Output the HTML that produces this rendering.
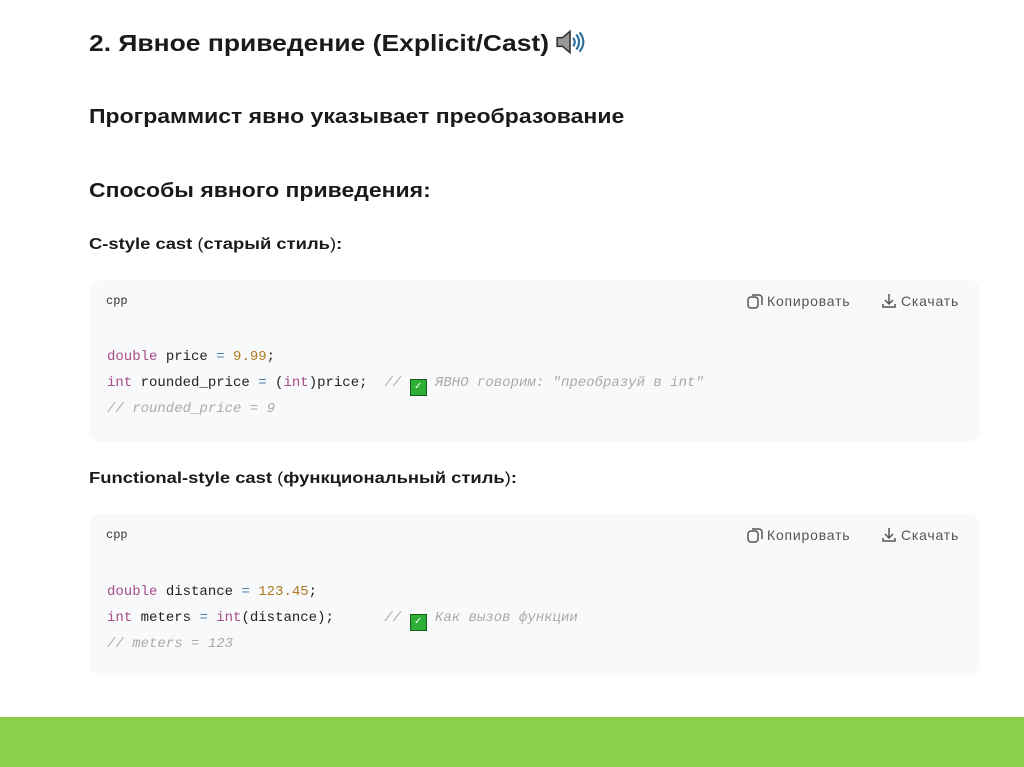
<!DOCTYPE html>
<html><head><meta charset="utf-8"><style>
body{margin:0;width:1024px;height:767px;background:#fff;position:relative;overflow:hidden;font-family:"Liberation Sans","DejaVu Sans",sans-serif;color:#1a1a1a}
.t{position:absolute;left:89px;font-weight:bold;white-space:nowrap;transform:scaleX(1.15);transform-origin:left center}
.code{position:absolute;left:89px;width:891px;background:#f8f9fb;border-radius:12px}
.lang{position:absolute;left:17px;top:14px;font-family:"Liberation Mono",monospace;font-size:12px;color:#333}
.b{position:absolute;top:12px;font-size:14px;color:#555;display:flex;align-items:center;gap:3px;letter-spacing:0.8px;white-space:nowrap}
pre{position:absolute;left:18px;margin:0;font-family:"Liberation Mono","DejaVu Sans Mono",monospace;font-size:14px;line-height:26px;color:#222}
.k{color:#a64d8a}.n{color:#b07a1e}.o{color:#4a7fb0}.c{color:#aaa;font-style:italic}
.ok{display:inline-block;width:15px;height:15px;background:#2fae36;border:1px solid #175c1b;vertical-align:-3px;color:#fff;font-size:11px;line-height:15px;text-align:center;font-style:normal}
.bar{position:absolute;left:0;top:717px;width:1024px;height:50px;background:#8ccf4c}
</style></head><body>
<div class="t" style="top:30px;font-size:23px">2. Явное приведение (Explicit/Cast)</div>
<svg width="32" height="26" viewBox="0 0 30 24" style="position:absolute;left:554px;top:29px"><path d="M3 8h5l7-6v20l-7-6H3z" fill="#999" stroke="#333" stroke-width="1.5"/><path d="M18 8q3 4 0 8M21 5q5 7 0 14M24 3q7 9 0 18" fill="none" stroke="#2a6f9e" stroke-width="2"/></svg>
<div class="t" style="top:106px;font-size:20px">Программист явно указывает преобразование</div>
<div class="t" style="top:180px;font-size:20px">Способы явного приведения:</div>
<div class="t" style="top:236px;font-size:16px">C-style cast <span style="font-weight:normal">(</span>старый стиль<span style="font-weight:normal">)</span>:</div>
<div class="code" style="top:280px;height:162px">
<div class="lang">cpp</div>
<div class="b" style="left:657px"><svg width="18" height="18" viewBox="0 0 18 18"><rect x="2" y="5" width="10" height="11" rx="3" fill="none" stroke="#555" stroke-width="1.5"/><path d="M6 3h7a3 3 0 0 1 3 3v7" fill="none" stroke="#555" stroke-width="1.5"/></svg>Копировать</div>
<div class="b" style="left:791px"><svg width="18" height="18" viewBox="0 0 18 18"><path d="M9 2v10M5 8l4 4 4-4M3 12v3h12v-3" fill="none" stroke="#555" stroke-width="1.5"/></svg>Скачать</div>
<pre style="top:64px"><span class="k">double</span> price <span class="o">=</span> <span class="n">9.99</span>;
<span class="k">int</span> rounded_price <span class="o">=</span> (<span class="k">int</span>)price;  <span class="c">// <span class="ok">✓</span> ЯВНО говорим: "преобразуй в int"</span>
<span class="c">// rounded_price = 9</span></pre>
</div>
<div class="t" style="top:470px;font-size:16px">Functional-style cast <span style="font-weight:normal">(</span>функциональный стиль<span style="font-weight:normal">)</span>:</div>
<div class="code" style="top:514px;height:162px">
<div class="lang">cpp</div>
<div class="b" style="left:657px"><svg width="18" height="18" viewBox="0 0 18 18"><rect x="2" y="5" width="10" height="11" rx="3" fill="none" stroke="#555" stroke-width="1.5"/><path d="M6 3h7a3 3 0 0 1 3 3v7" fill="none" stroke="#555" stroke-width="1.5"/></svg>Копировать</div>
<div class="b" style="left:791px"><svg width="18" height="18" viewBox="0 0 18 18"><path d="M9 2v10M5 8l4 4 4-4M3 12v3h12v-3" fill="none" stroke="#555" stroke-width="1.5"/></svg>Скачать</div>
<pre style="top:65px"><span class="k">double</span> distance <span class="o">=</span> <span class="n">123.45</span>;
<span class="k">int</span> meters <span class="o">=</span> <span class="k">int</span>(distance);      <span class="c">// <span class="ok">✓</span> Как вызов функции</span>
<span class="c">// meters = 123</span></pre>
</div>
<div class="bar"></div>
</body></html>
